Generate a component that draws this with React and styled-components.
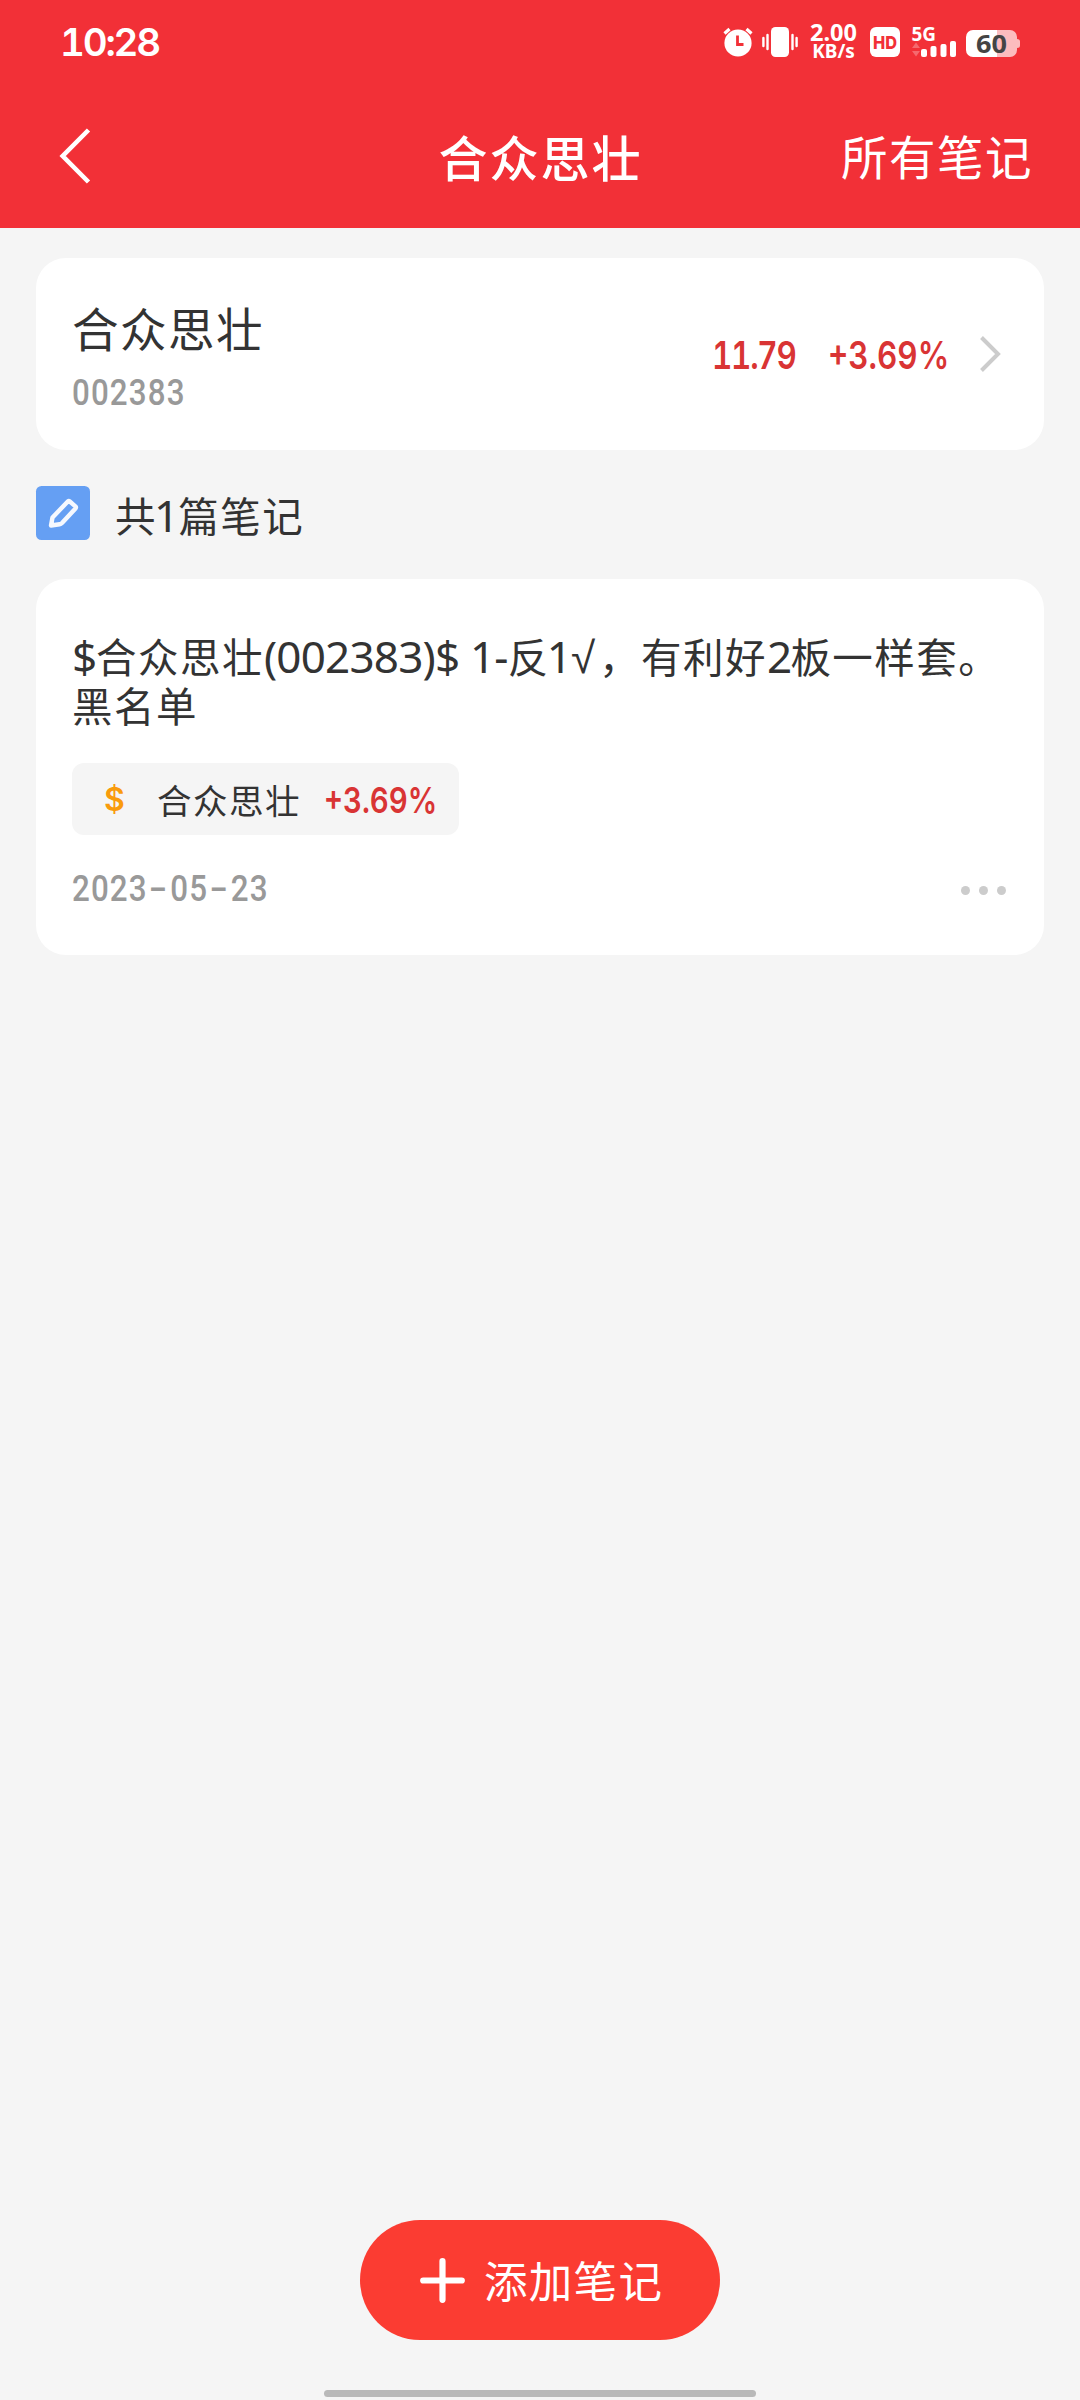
import React from 'react';
import styled, { createGlobalStyle } from 'styled-components';

const cjk = "'Noto Sans CJK SC', 'Noto Sans', sans-serif";
const latin = "'Noto Sans', 'Noto Sans CJK SC', sans-serif";
const numeric = "'Inter', 'Roboto', sans-serif";
const narrow = "'Roboto', 'Inter', sans-serif";

const GlobalStyle = createGlobalStyle`
  * {
    box-sizing: border-box;
  }
  body {
    margin: 0;
    background: #f5f5f5;
    font-family: ${cjk};
    color: #333;
  }
  svg {
    display: block;
    flex: none;
    overflow: visible;
  }
`;

const Screen = styled.div`
  display: flex;
  flex-direction: column;
  width: 1080px;
  height: 2400px;
  background: #f5f5f5;
  overflow: hidden;
`;

const Header = styled.header`
  display: flex;
  flex-direction: column;
  flex: none;
  height: 228px;
  background: #f23037;
  color: #fff;
`;

const StatusBar = styled.div`
  display: flex;
  align-items: center;
  justify-content: space-between;
  height: 84px;
  padding: 0 60px;
`;

const Clock = styled.time`
  font: 600 38.5px/44px ${numeric};
  font-feature-settings: 'tnum';
  letter-spacing: -2.2px;
`;

const StatusIcons = styled.div`
  display: flex;
  align-items: center;
  gap: 9px;
`;

const NetSpeed = styled.div`
  display: flex;
  flex-direction: column;
  align-items: center;
  width: 49px;
  margin: 0 3px 0 2px;
  font-family: ${latin};
  font-weight: 700;
  white-space: nowrap;
`;

const SpeedValue = styled.span`
  font-size: 23.5px;
  line-height: 18px;
`;

const SpeedUnit = styled.span`
  font-size: 19px;
  line-height: 20px;
`;

const HdBadge = styled.div`
  margin-right: 3px;
`;

const NavBar = styled.nav`
  display: grid;
  grid-template-columns: 1fr auto 1fr;
  align-items: center;
  height: 144px;
  padding: 0 47px 0 58px;
`;

const Title = styled.h1`
  margin: 0;
  padding-right: 10px;
  font-size: 49px;
  font-weight: 500;
  line-height: 72px;
  letter-spacing: 2px;
`;

const NavAction = styled.a`
  justify-self: end;
  padding-bottom: 2px;
  font-size: 46.5px;
  line-height: 72px;
  letter-spacing: 1.5px;
`;

const Content = styled.main`
  display: flex;
  flex-direction: column;
  flex: 1;
  padding: 30px 36px 0;
`;

const Card = styled.section`
  background: #fff;
  border-radius: 30px;
`;

const StockCard = styled(Card)`
  display: flex;
  align-items: center;
  height: 192px;
  padding: 0 43px 0 36px;
`;

const StockInfo = styled.div`
  display: flex;
  flex-direction: column;
  flex: 1;
  gap: 8px;
  padding-bottom: 2px;
`;

const StockName = styled.span`
  font-size: 46.5px;
  line-height: 72px;
  letter-spacing: 1.5px;
`;

/* condensed grey digits for the code and the date */
const Digits = styled.span`
  display: block;
  font: 500 36px/44px ${narrow};
  letter-spacing: 1.3px;
  color: #999;
  white-space: nowrap;
  transform: scaleX(0.87);
  transform-origin: left;
`;

const Dash = styled.span`
  display: inline-block;
  width: 26px;
  text-align: center;
  transform: scaleX(1.7);
`;

const Quote = styled.span`
  display: block;
  width: ${(p) => p.$width}px;
  padding-top: 2px;
  font: 600 ${(p) => p.$size}px/44px ${numeric};
  font-feature-settings: 'tnum';
  letter-spacing: ${(p) => p.$spacing || 0}px;
  color: #d93434;
  white-space: nowrap;
  transform: scaleX(0.815);
  transform-origin: left;
`;

const CountRow = styled.div`
  display: flex;
  align-items: center;
  height: 54px;
  margin: 36px 0 39px;
`;

const CountText = styled.span`
  margin-left: 25px;
  padding-top: 3px;
  font-size: 40.5px;
  line-height: 54px;
  letter-spacing: 1.5px;
`;

const Latin = styled.span`
  font-family: ${latin};
  font-size: 44px;
  line-height: 0;
  letter-spacing: ${(p) => p.$spacing || 0}px;
`;

const One = styled(Latin)`
  margin: 0 -1px 0 -3px;
`;

const Root = styled.span`
  display: inline-block;
  width: 28px;
  font-family: 'Liberation Sans', sans-serif;
  font-size: 44px;
  line-height: 0;
`;

const NoteCard = styled(Card)`
  display: flex;
  flex-direction: column;
  align-items: flex-start;
  height: 376px;
  padding: 52px 38px 0 36px;
`;

const NoteText = styled.p`
  margin: 0;
  font-size: 40.5px;
  line-height: 49px;
  letter-spacing: 1.5px;
  white-space: nowrap;
`;

const StockTag = styled.div`
  display: flex;
  align-items: center;
  width: 387px;
  height: 72px;
  margin-top: 34px;
  padding-left: 32px;
  border-radius: 12px;
  background: #f5f5f5;
`;

const Dollar = styled.span`
  width: 53px;
  padding-top: 1px;
  font: 600 32px/44px ${numeric};
  color: #f99b0c;
`;

const TagName = styled.span`
  width: 167px;
  padding-bottom: 1px;
  font-size: 34.5px;
  line-height: 54px;
  letter-spacing: 1.5px;
`;

const NoteFooter = styled.div`
  display: flex;
  align-items: center;
  justify-content: space-between;
  align-self: stretch;
  margin-top: 32px;
`;

const MoreButton = styled.div`
  display: flex;
  gap: 9px;
  padding-top: 2px;
`;

const Dot = styled.i`
  width: 9px;
  height: 9px;
  border-radius: 50%;
  background: #ccc;
`;

const Footer = styled.footer`
  display: flex;
  flex-direction: column;
  align-items: center;
  flex: none;
  height: 180px;
`;

const AddButton = styled.button`
  display: flex;
  align-items: center;
  flex: none;
  width: 360px;
  height: 120px;
  padding: 0 0 0 60px;
  border: 0;
  border-radius: 60px;
  background: #fb3c32;
  color: #fff;
  font-family: ${cjk};
  font-size: 43.5px;
  line-height: 60px;
  letter-spacing: 1.3px;
`;

const AddLabel = styled.span`
  margin-left: 19px;
`;

const HomeIndicator = styled.div`
  width: 432px;
  height: 7px;
  margin-top: 50px;
  border-radius: 4px;
  background: #b9b9b9;
`;

const AlarmIcon = () => (
  <svg width="30" height="30" viewBox="0 0 30 30">
    <circle cx="15" cy="16" r="13.6" fill="#fff" />
    <path d="M1.5 6.5 6.5 2M28.5 6.5 23.5 2" stroke="#fff" strokeWidth="3.2" />
    <path d="M14.5 8.5v9h6" fill="none" stroke="#f23037" strokeWidth="2.8" />
  </svg>
);

const VibrateIcon = () => (
  <svg width="36" height="30" viewBox="0 0 36 30">
    <rect x="9" width="18" height="30" rx="4.5" fill="#fff" />
    <path
      d="M5.5 8v14M30.5 8v14M1.4 11v8M34.6 11v8"
      stroke="#fff"
      strokeWidth="2.4"
      strokeLinecap="round"
    />
  </svg>
);

const HdIcon = () => (
  <svg width="30" height="30" viewBox="0 0 30 30">
    <rect width="30" height="30" rx="6" fill="#fff" />
    <text
      x="3"
      y="21.5"
      fill="#f23037"
      fontFamily="Inter"
      fontSize="18"
      fontWeight="800"
      textLength="24"
      lengthAdjust="spacingAndGlyphs"
    >
      HD
    </text>
  </svg>
);

const SignalIcon = () => (
  <svg width="45" height="30" viewBox="0 0 45 30">
    <text
      x="-0.5"
      y="14.3"
      fill="#fff"
      fontFamily="Noto Sans"
      fontSize="19.5"
      fontWeight="700"
      textLength="24.5"
      lengthAdjust="spacingAndGlyphs"
    >
      5G
    </text>
    <path d="M0 21 4 15.5 8 21ZM0 24h8L4 29.5Z" fill="#f5696e" />
    <g fill="#fff">
      <rect x="9" y="22" width="6" height="8" rx="2" />
      <rect x="18.5" y="19" width="6" height="11" rx="2" />
      <rect x="28.5" y="17" width="6" height="13" rx="2" />
      <rect x="38" y="14" width="6" height="16" rx="2" />
    </g>
  </svg>
);

const BatteryIcon = () => (
  <svg width="54" height="30" viewBox="0 0 54 30">
    <path
      d="M31 3h13a7 7 0 0 1 7 7v2q3 0 3 2.5v4q0 2.5-3 2.5v2a7 7 0 0 1-7 7H31Z"
      fill="#fcbcbe"
    />
    <path d="M31 3H7a7 7 0 0 0-7 7v13a7 7 0 0 0 7 7h24Z" fill="#fff" />
    <text
      x="10"
      y="25.5"
      fill="#444"
      fontFamily="Noto Sans"
      fontSize="25"
      fontWeight="700"
      textLength="31"
      lengthAdjust="spacingAndGlyphs"
    >
      60
    </text>
  </svg>
);

const BackIcon = () => (
  <svg width="32" height="56" viewBox="0 0 32 56">
    <path d="M30.5 2 4.7 28l25.8 26" fill="none" stroke="#fff" strokeWidth="4.6" />
  </svg>
);

const ChevronIcon = () => (
  <svg width="22" height="36" viewBox="0 0 22 36">
    <path d="M2.5 1.5 19 18 2.5 34.5" fill="none" stroke="#ccc" strokeWidth="4" />
  </svg>
);

const NoteIcon = () => (
  <svg width="54" height="54" viewBox="0 0 54 54">
    <rect width="54" height="54" rx="5.5" fill="#659ff3" />
    <path
      d="M15 39.5 16.5 31.5 31.8 15.5q1-.8 2 0l5.6 4.8q1 1 .1 2.1L26 37q-1 1-2.4 1.2Z"
      fill="none"
      stroke="#f5f8fe"
      strokeWidth="4.4"
      strokeLinejoin="round"
    />
  </svg>
);

const PlusIcon = () => (
  <svg width="45" height="45" viewBox="0 0 45 45">
    <path
      d="M22.5 3.2v38.6M3.2 22.5h38.6"
      stroke="#fff"
      strokeWidth="6.2"
      strokeLinecap="round"
    />
  </svg>
);

const App = () => (
  <Screen>
    <GlobalStyle />
    <Header>
      <StatusBar>
        <Clock>10:28</Clock>
        <StatusIcons>
          <AlarmIcon />
          <VibrateIcon />
          <NetSpeed>
            <SpeedValue>2.00</SpeedValue>
            <SpeedUnit>KB/s</SpeedUnit>
          </NetSpeed>
          <HdBadge>
            <HdIcon />
          </HdBadge>
          <SignalIcon />
          <BatteryIcon />
        </StatusIcons>
      </StatusBar>
      <NavBar>
        <BackIcon />
        <Title>合众思壮</Title>
        <NavAction>所有笔记</NavAction>
      </NavBar>
    </Header>

    <Content>
      <StockCard>
        <StockInfo>
          <StockName>合众思壮</StockName>
          <Digits>002383</Digits>
        </StockInfo>
        <Quote $size={38.5} $width={116} $spacing={-1.5}>11.79</Quote>
        <Quote $size={38.5} $width={151}>+3.69%</Quote>
        <ChevronIcon />
      </StockCard>

      <CountRow>
        <NoteIcon />
        <CountText>
          共<One>1</One>篇笔记
        </CountText>
      </CountRow>

      <NoteCard>
        <NoteText>
          <Latin $spacing={-1.2}>$</Latin>合众思壮<Latin $spacing={-0.8}>(002383)$ 1-</Latin>反
          <One>1</One>
          <Root>√</Root>，有利好<Latin $spacing={-1.7}>2</Latin>板一样套。
          <br />
          黑名单
        </NoteText>
        <StockTag>
          <Dollar>$</Dollar>
          <TagName>合众思壮</TagName>
          <Quote $size={36} $width={120}>+3.69%</Quote>
        </StockTag>
        <NoteFooter>
          <Digits>
            2023<Dash>-</Dash>05<Dash>-</Dash>23
          </Digits>
          <MoreButton>
            <Dot />
            <Dot />
            <Dot />
          </MoreButton>
        </NoteFooter>
      </NoteCard>
    </Content>

    <Footer>
      <AddButton>
        <PlusIcon />
        <AddLabel>添加笔记</AddLabel>
      </AddButton>
      <HomeIndicator />
    </Footer>
  </Screen>
);

export default App;
